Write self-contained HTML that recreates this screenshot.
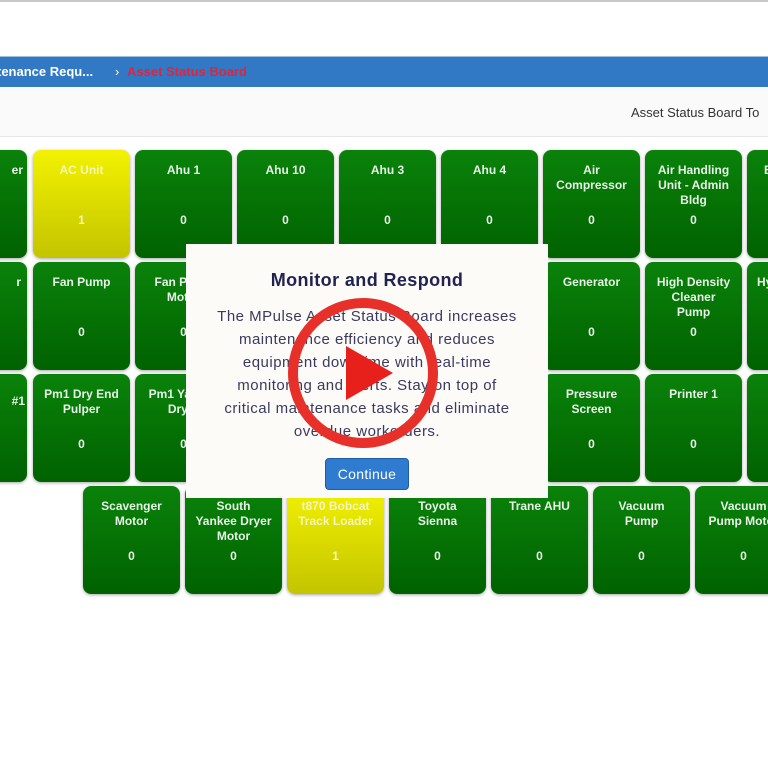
<!DOCTYPE html>
<html><head><meta charset="utf-8"><style>
*{margin:0;padding:0;box-sizing:border-box}
body{width:768px;height:769px;background:#fff;position:relative;overflow:hidden;font-family:"Liberation Sans","DejaVu Sans",sans-serif}
.top{position:absolute;left:0;top:0;width:768px;height:2px;background:#c8c8c8}
.bar{position:absolute;left:0;top:56px;width:768px;height:31px;background:#3179c4;border-top:1px solid #9cbde0;color:#fff;font-size:13px;font-weight:bold;line-height:30px}
.bar .r{color:#e0243c}
.sub{position:absolute;left:0;top:87px;width:768px;height:50px;background:#fafafa;border-bottom:1px solid #e6e6e6}
.sub span{position:absolute;left:631px;top:18px;font-size:13px;color:#333;white-space:nowrap}
.t{position:absolute;width:97px;height:108px;border-radius:8px;background:linear-gradient(#0a820a,#006200);color:#e8f2e8;font-size:12px;font-weight:bold;text-align:center;box-shadow:0 1px 3px rgba(0,0,0,.35);overflow:hidden}
.t.y{background:linear-gradient(#f2f200,#c4c400);color:#f4f4c0}
.t .n{position:absolute;left:-10px;right:-10px;top:13px;line-height:15px;white-space:nowrap}
.t .v{position:absolute;left:0;right:0;top:63px}
.modal{position:absolute;left:186px;top:244px;width:362px;height:254px;background:#fcfbf7;text-align:center;color:#2a2a55}
.modal h1{font-size:18px;font-weight:bold;margin-top:26px;color:#222250;letter-spacing:.4px}
.modal p{font-size:15px;line-height:23px;margin:14px 0 0;color:#3a3a60;white-space:nowrap;letter-spacing:.5px}
.btn{display:inline-block;margin-top:15px;background:#2e7bcf;border:1px solid #1c5fa8;border-radius:4px;color:#fff;font-size:14px;padding:7px 12px;letter-spacing:.3px}
svg{position:absolute;left:0;top:0}
</style></head><body>
<div class="top"></div>
<div class="bar"><span style="position:absolute;left:-3px">tenance Requ...</span><span style="position:absolute;left:115px;font-weight:normal">›</span><span class="r" style="position:absolute;left:127px">Asset Status Board</span></div>
<div class="sub"><span>Asset Status Board To</span></div>

<div class="t" style="left:-70px;top:150px"><div class="n" style="text-align:right;right:4px">er</div></div>
<div class="t y" style="left:33px;top:150px"><div class="n">AC Unit</div><div class="v">1</div></div>
<div class="t" style="left:135px;top:150px"><div class="n">Ahu 1</div><div class="v">0</div></div>
<div class="t" style="left:237px;top:150px"><div class="n">Ahu 10</div><div class="v">0</div></div>
<div class="t" style="left:339px;top:150px"><div class="n">Ahu 3</div><div class="v">0</div></div>
<div class="t" style="left:441px;top:150px"><div class="n">Ahu 4</div><div class="v">0</div></div>
<div class="t" style="left:543px;top:150px"><div class="n">Air<br>Compressor</div><div class="v">0</div></div>
<div class="t" style="left:645px;top:150px"><div class="n">Air Handling<br>Unit - Admin<br>Bldg</div><div class="v">0</div></div>
<div class="t" style="left:747px;top:150px"><div class="n" style="text-align:left;left:17px">B</div></div>

<div class="t" style="left:-70px;top:262px"><div class="n" style="text-align:right;right:6px">r</div></div>
<div class="t" style="left:33px;top:262px"><div class="n">Fan Pump</div><div class="v">0</div></div>
<div class="t" style="left:135px;top:262px"><div class="n">Fan Pump<br>Motor</div><div class="v">0</div></div>
<div class="t" style="left:237px;top:262px"></div>
<div class="t" style="left:339px;top:262px"></div>
<div class="t" style="left:441px;top:262px"></div>
<div class="t" style="left:543px;top:262px"><div class="n">Generator</div><div class="v">0</div></div>
<div class="t" style="left:645px;top:262px"><div class="n">High Density<br>Cleaner<br>Pump</div><div class="v">0</div></div>
<div class="t" style="left:747px;top:262px"><div class="n" style="text-align:left;left:10px">Hy</div></div>

<div class="t" style="left:-70px;top:374px"><div class="n" style="top:20px;text-align:right;right:2px">#1</div></div>
<div class="t" style="left:33px;top:374px"><div class="n">Pm1 Dry End<br>Pulper</div><div class="v">0</div></div>
<div class="t" style="left:135px;top:374px"><div class="n">Pm1 Yankee<br>Dryer</div><div class="v">0</div></div>
<div class="t" style="left:237px;top:374px"></div>
<div class="t" style="left:339px;top:374px"></div>
<div class="t" style="left:441px;top:374px"></div>
<div class="t" style="left:543px;top:374px"><div class="n">Pressure<br>Screen</div><div class="v">0</div></div>
<div class="t" style="left:645px;top:374px"><div class="n">Printer 1</div><div class="v">0</div></div>
<div class="t" style="left:747px;top:374px"></div>

<div class="t" style="left:83px;top:486px"><div class="n">Scavenger<br>Motor</div><div class="v">0</div></div>
<div class="t" style="left:185px;top:486px"><div class="n">South<br>Yankee Dryer<br>Motor</div><div class="v">0</div></div>
<div class="t y" style="left:287px;top:486px"><div class="n">t870 Bobcat<br>Track Loader</div><div class="v">1</div></div>
<div class="t" style="left:389px;top:486px"><div class="n">Toyota<br>Sienna</div><div class="v">0</div></div>
<div class="t" style="left:491px;top:486px"><div class="n">Trane AHU</div><div class="v">0</div></div>
<div class="t" style="left:593px;top:486px"><div class="n">Vacuum<br>Pump</div><div class="v">0</div></div>
<div class="t" style="left:695px;top:486px"><div class="n">Vacuum<br>Pump Motor</div><div class="v">0</div></div>

<div class="modal">
<h1>Monitor and Respond</h1>
<p>The MPulse Asset Status Board increases<br>maintenance efficiency and reduces<br>equipment downtime with real-time<br>monitoring and alerts. Stay on top of<br>critical maintenance tasks and eliminate<br>overdue workorders.</p>
<div class="btn">Continue</div>
</div>

<svg width="768" height="769">
<circle cx="363" cy="373" r="70" fill="none" stroke="#e8302a" stroke-width="10"/>
<path d="M346 346 L346 400 L393 373 Z" fill="#e8201c"/>
</svg>
</body></html>
